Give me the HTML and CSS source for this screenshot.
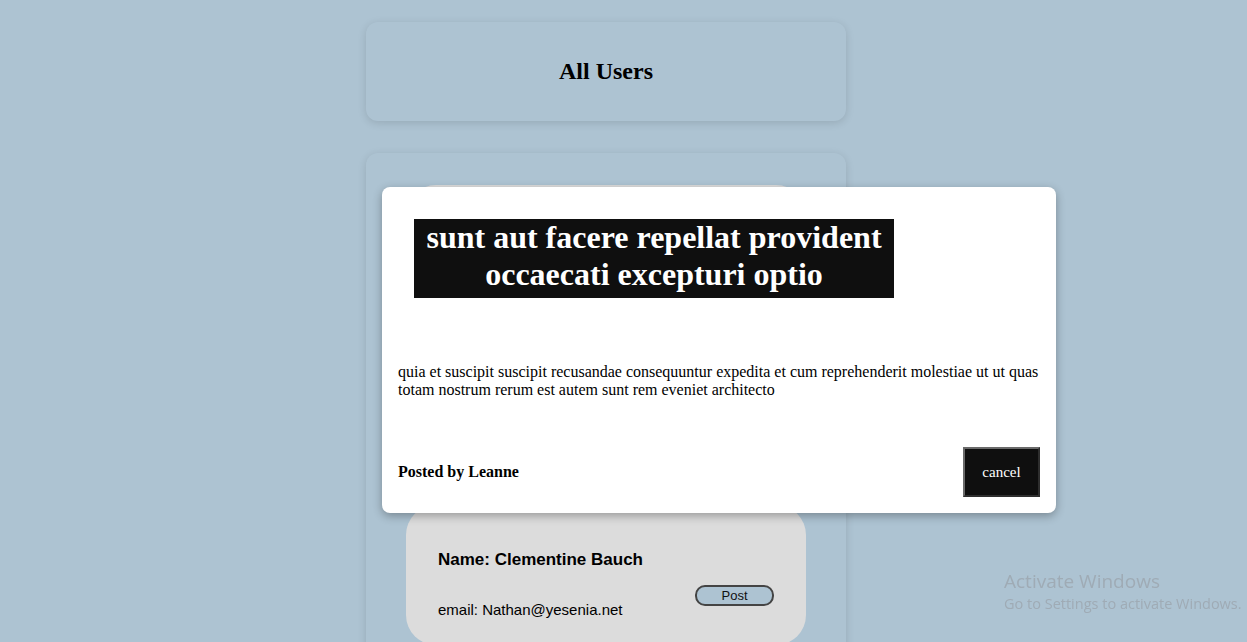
FILE: index.html
```html
<!DOCTYPE html>
<html>
<head>
<meta charset="utf-8">
<link rel="stylesheet" href="styles.css">
</head>
<body>
<div class="page">
  <header class="title-card">
    <h2>All Users</h2>
  </header>
  <section class="list-card">
    <div class="user-card">
      <h3>Name: Leanne Graham</h3>
      <div class="user-row">
        <p>email: Sincere@april.biz</p>
        <button class="post-btn">Post</button>
      </div>
    </div>
    <div class="user-card">
      <h3>Name: Ervin Howell</h3>
      <div class="user-row">
        <p>email: Shanna@melissa.tv</p>
        <button class="post-btn">Post</button>
      </div>
    </div>
    <div class="user-card">
      <h3>Name: Clementine Bauch</h3>
      <div class="user-row">
        <p>email: Nathan@yesenia.net</p>
        <button class="post-btn">Post</button>
      </div>
    </div>

    <div class="modal">
      <h1 class="modal-title">sunt aut facere repellat provident occaecati excepturi optio</h1>
      <p class="modal-body">quia et suscipit suscipit recusandae consequuntur expedita et cum reprehenderit molestiae ut ut quas totam nostrum rerum est autem sunt rem eveniet architecto</p>
      <div class="modal-footer">
        <strong class="author">Posted by Leanne</strong>
        <button class="cancel-btn">cancel</button>
      </div>
    </div>
  </section>
</div>
<div class="watermark">
  <div class="wm-title">Activate Windows</div>
  <div class="wm-sub">Go to Settings to activate Windows.</div>
</div>
</body>
</html>
```

FILE: styles.css
```css
html, body {
  margin: 0;
  padding: 0;
  height: 100%;
  overflow: hidden;
}
body {
  background: #adc3d2;
  font-family: "Liberation Serif", "Times New Roman", serif;
  color: #000;
}
.page {
  display: flex;
  flex-direction: column;
  align-items: center;
  gap: 32px;
  padding: 22px 35px 0 0;
}
.title-card {
  width: 480px;
  height: 99px;
  box-sizing: border-box;
  border-radius: 12px;
  background: #adc3d2;
  box-shadow: 0 2px 8px rgba(0, 0, 0, 0.13);
  display: flex;
  align-items: center;
  justify-content: center;
}
.title-card h2 {
  margin: 0;
  font-size: 24px;
  font-weight: bold;
}
.list-card {
  position: relative;
  width: 480px;
  box-sizing: border-box;
  border-radius: 12px;
  background: #adc3d2;
  box-shadow: 0 2px 8px rgba(0, 0, 0, 0.13);
  padding: 32px 40px;
  display: flex;
  flex-direction: column;
  gap: 20px;
}
.user-card {
  background: #dcdcdc;
  border-radius: 30px;
  padding: 45px 32px 30px;
  font-family: "Liberation Sans", Arial, sans-serif;
  height: 140px;
  box-sizing: border-box;
}
.user-card h3 {
  margin: 0;
  font-size: 17px;
  line-height: 20px;
  font-weight: bold;
}
.user-row {
  display: flex;
  justify-content: space-between;
  align-items: flex-start;
  margin-top: 15px;
}
.user-row p {
  margin: 16px 0 0;
  font-size: 15px;
  line-height: 17px;
}
.post-btn {
  width: 79px;
  height: 21px;
  margin: 0;
  padding: 0;
  background: #adc3d2;
  border: 2px solid #444;
  border-radius: 10px;
  font-family: "Liberation Sans", Arial, sans-serif;
  font-size: 13px;
  color: #111;
}
.modal {
  position: absolute;
  left: 16px;
  top: 34px;
  width: 674px;
  height: 326px;
  box-sizing: border-box;
  background: #fff;
  border-radius: 8px;
  box-shadow: 0 3px 10px rgba(0, 0, 0, 0.3);
  padding: 16px;
  display: flex;
  flex-direction: column;
}
.modal-title {
  margin: 16px 0 0 16px;
  width: 480px;
  box-sizing: border-box;
  background: #0f0f0f;
  color: #fff;
  font-size: 32px;
  line-height: 37px;
  font-weight: bold;
  text-align: center;
  padding: 0 0 5px;
}
.modal-body {
  margin: 65px 0 0;
  font-size: 16px;
  line-height: 18px;
}
.modal-footer {
  margin-top: auto;
  display: flex;
  justify-content: space-between;
  align-items: center;
}
.author {
  font-size: 16px;
  font-weight: bold;
}
.cancel-btn {
  width: 77px;
  height: 50px;
  background: #0f0f0f;
  color: #fff;
  border-width: 2px;
  border-style: solid;
  border-top-color: #6a6a6a;
  border-left-color: #6a6a6a;
  border-right-color: #2e2e2e;
  border-bottom-color: #2e2e2e;
  font-family: "Liberation Serif", "Times New Roman", serif;
  font-size: 15px;
  padding: 0;
}
.watermark {
  position: fixed;
  left: 1004px;
  top: 569px;
  color: #9fabb5;
  font-family: "Open Sans", "Noto Sans", sans-serif;
}
.wm-title {
  font-size: 19px;
  line-height: 24px;
}
.wm-sub {
  font-size: 14.5px;
  line-height: 21px;
}
```
